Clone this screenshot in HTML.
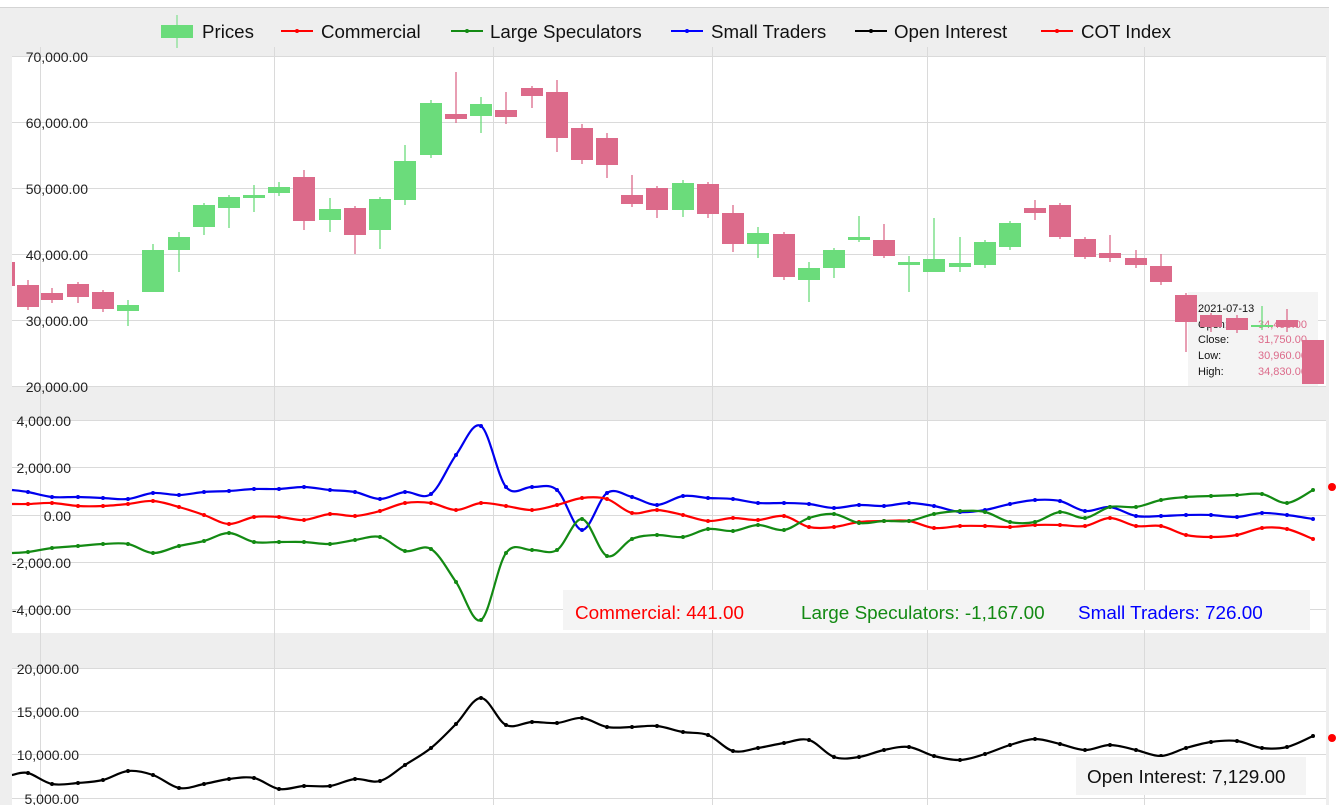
<!DOCTYPE html><html><head><meta charset="utf-8"><style>
body{margin:0;width:1338px;height:805px;overflow:hidden;background:#fff;font-family:"Liberation Sans",sans-serif}
svg{position:absolute;left:0;top:0}
</style></head><body>
<svg width="1338" height="805" xmlns="http://www.w3.org/2000/svg" font-family="Liberation Sans, sans-serif">
<rect x="0" y="7" width="1329" height="798" fill="#eeeeee"/>
<line x1="0" y1="7.5" x2="1329" y2="7.5" stroke="#d4d4d4"/>
<rect x="12" y="57" width="1314" height="329" fill="#fff"/>
<rect x="12" y="421" width="1314" height="212" fill="#fff"/>
<rect x="12" y="668" width="1314" height="137" fill="#fff"/>
<g stroke="#dadada" stroke-width="1">
<line x1="12" y1="56.5" x2="1326" y2="56.5"/><line x1="12" y1="122.5" x2="1326" y2="122.5"/><line x1="12" y1="188.5" x2="1326" y2="188.5"/><line x1="12" y1="254.5" x2="1326" y2="254.5"/><line x1="12" y1="320.5" x2="1326" y2="320.5"/><line x1="12" y1="386.5" x2="1326" y2="386.5"/>
<line x1="12" y1="420.5" x2="1326" y2="420.5"/><line x1="12" y1="467.5" x2="1326" y2="467.5"/><line x1="12" y1="515.5" x2="1326" y2="515.5"/><line x1="12" y1="562.5" x2="1326" y2="562.5"/><line x1="12" y1="609.5" x2="1326" y2="609.5"/>
<line x1="12" y1="668.5" x2="1326" y2="668.5"/><line x1="12" y1="711.5" x2="1326" y2="711.5"/><line x1="12" y1="754.5" x2="1326" y2="754.5"/><line x1="12" y1="798.5" x2="1326" y2="798.5"/>
<line x1="40.5" y1="47" x2="40.5" y2="805"/><line x1="274.5" y1="47" x2="274.5" y2="805"/><line x1="493.5" y1="47" x2="493.5" y2="805"/><line x1="712.5" y1="47" x2="712.5" y2="805"/><line x1="927.5" y1="47" x2="927.5" y2="805"/><line x1="1144.5" y1="47" x2="1144.5" y2="805"/>
</g>
<g font-size="14" fill="#222" text-anchor="end">
<text x="88" y="62">70,000.00</text><text x="88" y="128">60,000.00</text><text x="88" y="194">50,000.00</text><text x="88" y="260">40,000.00</text><text x="88" y="326">30,000.00</text><text x="88" y="392">20,000.00</text>
<text x="71" y="426">4,000.00</text><text x="71" y="473">2,000.00</text><text x="71" y="521">0.00</text><text x="71" y="568">-2,000.00</text><text x="71" y="615">-4,000.00</text>
<text x="79" y="674">20,000.00</text><text x="79" y="717">15,000.00</text><text x="79" y="760">10,000.00</text><text x="79" y="804">5,000.00</text>
</g>
<g font-size="18.7" fill="#111">
<line x1="177" y1="15" x2="177" y2="48" stroke="#6bdc7b"/><rect x="161" y="25" width="32" height="13" fill="#6bdc7b"/><text x="202" y="38">Prices</text>
<line x1="281" y1="31" x2="313" y2="31" stroke="#f00" stroke-width="2"/><circle cx="297" cy="31" r="2" fill="#f00"/><text x="321" y="38">Commercial</text>
<line x1="451" y1="31" x2="483" y2="31" stroke="#138a13" stroke-width="2"/><circle cx="467" cy="31" r="2" fill="#138a13"/><text x="490" y="38">Large Speculators</text>
<line x1="671" y1="31" x2="703" y2="31" stroke="#00f" stroke-width="2"/><circle cx="687" cy="31" r="2" fill="#00f"/><text x="711" y="38">Small Traders</text>
<line x1="855" y1="31" x2="887" y2="31" stroke="#000" stroke-width="2"/><circle cx="871" cy="31" r="2" fill="#000"/><text x="894" y="38">Open Interest</text>
<line x1="1041" y1="31" x2="1073" y2="31" stroke="#f00" stroke-width="2"/><circle cx="1057" cy="31" r="2" fill="#f00"/><text x="1081" y="38">COT Index</text>
</g>
<rect x="1188" y="292" width="130" height="94" fill="#f4f4f4"/>
<g font-size="11" fill="#111"><text x="1198" y="312">2021-07-13</text><text x="1198" y="328">Open:</text><text x="1198" y="343">Close:</text><text x="1198" y="359">Low:</text><text x="1198" y="375">High:</text></g>
<g font-size="11" fill="#dc6a8a"><text x="1258" y="328">34,495.00</text><text x="1258" y="343">31,750.00</text><text x="1258" y="359">30,960.00</text><text x="1258" y="375">34,830.00</text></g>
<g id="cd"></g>
<g id="ln" fill="none" stroke-width="2.2" stroke-linejoin="round"></g>
<rect x="1302" y="340" width="22" height="44" fill="#dc6a8a"/>
<rect x="563" y="590" width="747" height="40" fill="#f4f4f4"/>
<g font-size="18.9"><text x="575" y="619" fill="#f00">Commercial: 441.00</text><text x="801" y="619" fill="#138a13">Large Speculators: -1,167.00</text><text x="1078" y="619" fill="#00f">Small Traders: 726.00</text></g>
<rect x="1076" y="757" width="230" height="38" fill="#f4f4f4"/>
<text x="1087" y="783" font-size="18.9" fill="#111">Open Interest: 7,129.00</text>
<circle cx="1332" cy="487" r="4" fill="#f00"/><circle cx="1332" cy="738" r="4" fill="#f00"/>
</svg>
<script>
var C=[[28,285,307,280,310,0],[52,293,300,288,303,0],[78,284,297,282,303,0],[103,292,309,290,312,0],[128,305,311,300,326,1],[153,250,292,244,292,1],[179,237,250,232,272,1],[204,205,227,203,235,1],[229,197,208,195,228,1],[254,195,198,185,212,1],[279,187,193,182,196,1],[304,177,221,170,230,0],[330,209,220,198,232,1],[355,208,235,206,254,0],[380,199,230,197,249,1],[405,161,200,145,205,1],[431,103,155,100,158,1],[456,114,119,72,123,0],[481,104,116,97,133,1],[506,110,117,92,124,0],[532,88,96,86,108,0],[557,92,138,80,152,0],[582,128,160,124,164,0],[607,138,165,133,178,0],[632,195,204,175,207,0],[657,188,210,186,218,0],[683,183,210,180,217,1],[708,184,214,182,218,0],[733,213,244,205,252,0],[758,233,244,227,258,1],[784,234,277,232,280,0],[809,268,280,262,302,1],[834,250,268,248,278,1],[859,237,240,216,242,1],[884,240,256,224,258,0],[909,262,265,256,292,1],[934,259,272,218,272,1],[960,263,267,237,272,1],[985,242,265,240,268,1],[1010,223,247,221,250,1],[1035,208,213,200,220,0],[1060,205,237,203,239,0],[1085,239,257,237,259,0],[1110,253,258,235,262,0],[1136,258,265,250,268,0],[1161,266,282,254,285,0],[1186,295,322,293,352,0],[1211,315,327,313,332,0],[1237,318,330,315,333,0],[1262,325,326,306,330,1],[1287,320,327,309,332,0]];
var s='';C.forEach(function(c){var col=c[5]?'#6bdc7b':'#dc6a8a';s+='<line x1="'+c[0]+'" x2="'+c[0]+'" y1="'+c[3]+'" y2="'+c[4]+'" stroke="'+col+'" stroke-width="1.3"/><rect x="'+(c[0]-11)+'" y="'+c[1]+'" width="22" height="'+Math.max(2,c[2]-c[1])+'" fill="'+col+'"/>';});
s+='<rect x="12" y="262" width="3" height="24" fill="#dc6a8a"/>';
document.getElementById('cd').innerHTML=s;
var X=[12,28,52,78,103,128,153,179,204,229,254,279,304,330,355,380,405,431,456,481,506,532,557,582,607,632,657,683,708,733,758,784,809,834,859,884,909,934,960,985,1010,1035,1060,1085,1110,1136,1161,1186,1211,1237,1262,1287,1313];
var B=[490,492,497,497,498,499,493,495,492,491,489,489,487,490,492,499,492,494,455,426,487,487,490,530,493,497,505,496,498,499,503,503,504,508,505,506,503,506,512,510,504,500,501,511,507,516,516,515,515,517,513,515,519];
var R=[504,504,503,506,506,504,501,507,515,524,517,517,520,514,516,511,503,503,510,503,506,510,505,498,499,513,510,515,521,518,520,516,527,527,522,521,521,528,526,526,527,525,525,526,518,526,526,535,537,535,528,529,539];
var G=[553,552,548,546,544,544,553,546,541,533,542,542,542,544,540,537,551,549,582,620,553,550,550,519,556,539,535,537,529,531,525,530,518,514,523,521,521,514,511,512,522,522,512,518,507,507,500,497,496,495,494,503,490];
var K=[775,773,784,783,780,771,775,788,784,779,778,789,786,786,779,781,765,748,724,698,725,722,723,718,727,727,726,732,735,751,748,743,740,757,757,750,747,756,760,754,745,739,744,750,745,750,756,748,742,741,748,747,736];
function P(Y,col){var d='M'+X[0]+','+Y[0];for(var i=0;i<X.length-1;i++){var x0=X[Math.max(0,i-1)],y0=Y[Math.max(0,i-1)],x1=X[i],y1=Y[i],x2=X[i+1],y2=Y[i+1],x3=X[Math.min(X.length-1,i+2)],y3=Y[Math.min(X.length-1,i+2)];d+=' C'+(x1+(x2-x0)/6)+','+(y1+(y2-y0)/6)+' '+(x2-(x3-x1)/6)+','+(y2-(y3-y1)/6)+' '+x2+','+y2;}
var o='<path d="'+d+'" stroke="'+col+'"/>';for(var i=1;i<X.length;i++)o+='<circle cx="'+X[i]+'" cy="'+Y[i]+'" r="2" fill="'+col+'" stroke="none"/>';return o;}
document.getElementById('ln').innerHTML=P(B,'#0000ee')+P(R,'#f00')+P(G,'#138a13')+P(K,'#000');
</script>
</body></html>
